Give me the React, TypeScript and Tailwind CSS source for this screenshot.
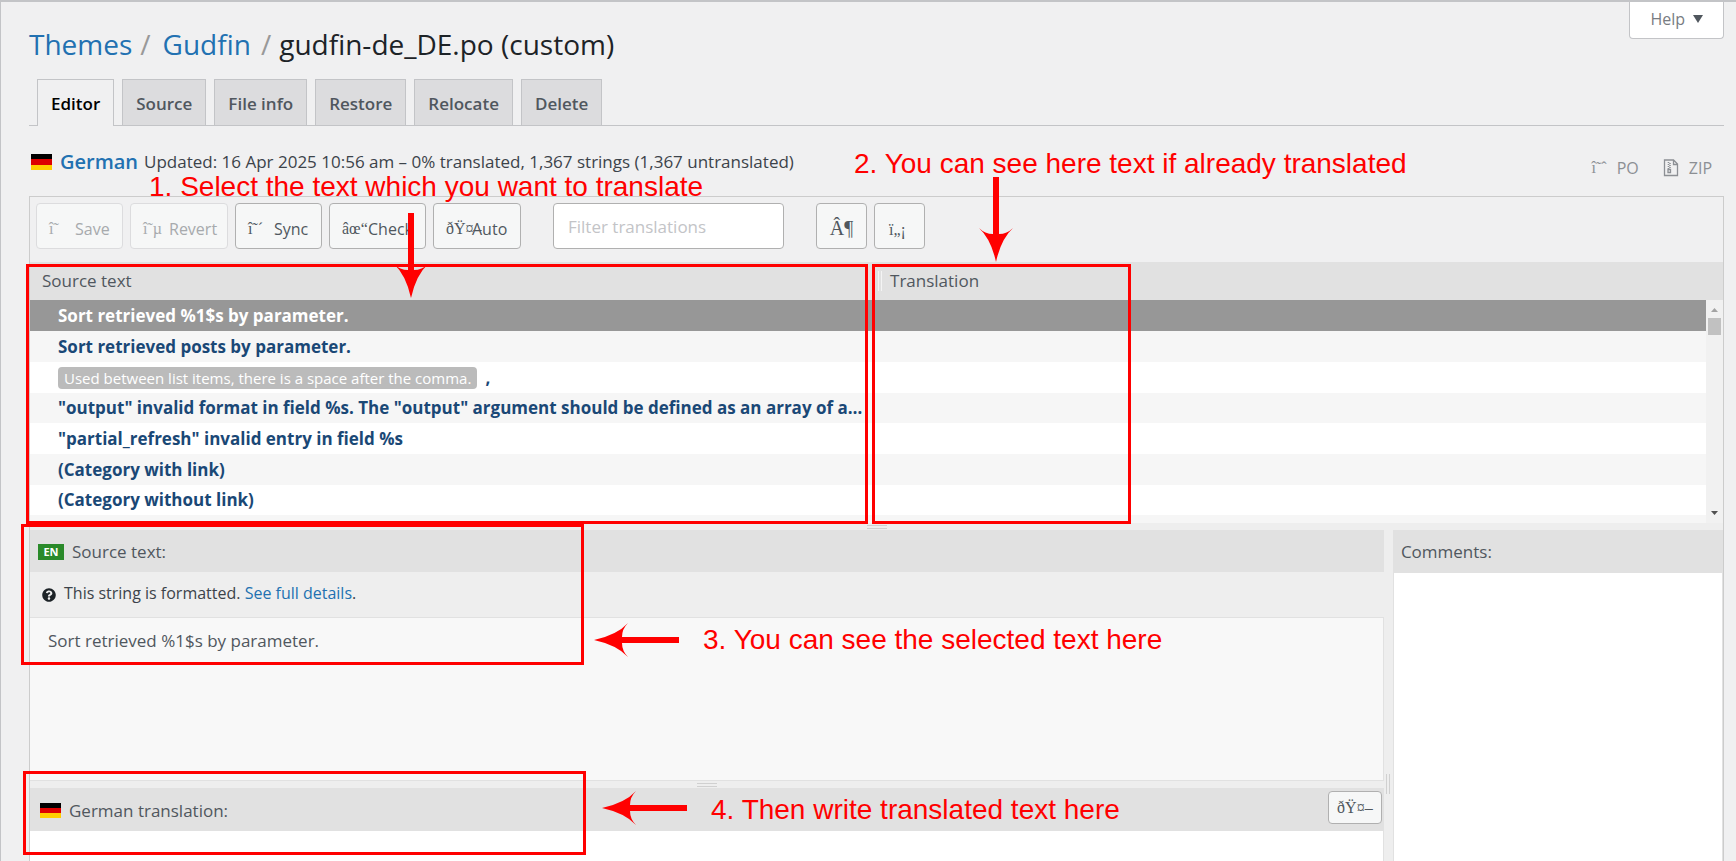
import type { ReactNode } from "react";
import { FaQuestionCircle } from "react-icons/fa";

const tabs = ["Source", "File info", "Restore", "Relocate", "Delete"];

const rows: { text: string; context?: string }[] = [
  { text: "Sort retrieved %1$s by parameter." },
  { text: "Sort retrieved posts by parameter." },
  { text: ",", context: "Used between list items, there is a space after the comma." },
  { text: '"output" invalid format in field %s. The "output" argument should be defined as an array of arguments.' },
  { text: '"partial_refresh" invalid entry in field %s' },
  { text: "(Category with link)" },
  { text: "(Category without link)" },
  { text: "" },
];

function Flag() {
  return (
    <span className="flex flex-col w-[21px] h-4 shrink-0">
      <span className="flex-1 bg-black" />
      <span className="flex-1 bg-[#dd0000]" />
      <span className="flex-1 bg-[#ffce00]" />
    </span>
  );
}

interface ToolButtonProps {
  icon: string;
  label: string;
  width: string;
  disabled?: boolean;
}

function ToolButton({ icon, label, width, disabled }: ToolButtonProps) {
  return (
    <button
      type="button"
      disabled={disabled}
      className={`${width} h-[46px] flex items-center shrink-0 rounded border bg-[#f6f7f7] whitespace-nowrap pt-1.5 pl-3 ${
        disabled ? "border-[#dcdcde] text-[#a7aaad]" : "border-[#b0b0b0] text-[#50575e]"
      }`}
    >
      <span className="font-['Liberation_Serif',serif] w-[26px] text-left">{icon}</span>
      <span>{label}</span>
    </button>
  );
}

function Arrow({ className, down }: { className: string; down?: boolean }) {
  return down ? (
    <svg className={`absolute ${className}`} width="34" height="85" viewBox="0 0 34 85" fill="#f00">
      <path d="M14 0h6v57q8 0 14-6Q22 62 17 85 12 62 0 51q6 6 14 6z" />
    </svg>
  ) : (
    <svg className={`absolute ${className}`} width="85" height="34" viewBox="0 0 85 34" fill="#f00">
      <path d="M85 14v6H28q0 8 6 14Q23 22 0 17 23 12 34 0q-6 6-6 14z" />
    </svg>
  );
}

function Note({ className, children }: { className: string; children: ReactNode }) {
  return (
    <p className={`absolute whitespace-nowrap font-['Liberation_Sans',Arial,sans-serif] text-[28px] leading-8 text-[#f00] ${className}`}>
      {children}
    </p>
  );
}

function Frame({ className }: { className: string }) {
  return <div className={`absolute pointer-events-none border-3 border-[#f00] ${className}`} />;
}

// drag handle between two stacked panes
function Grip() {
  return <span className="w-5 h-1 border-y border-[#d0d0d0]" />;
}

export default function App() {
  return (
    <div className="relative h-screen overflow-hidden flex flex-col border-t-2 border-l border-[#c3c4c7] bg-[#f0f0f1] pl-7 pr-3 font-['Open_Sans','Noto_Sans',sans-serif] text-base text-[#50575e]">
      <header className="flex items-start justify-between">
        <h1 className="flex items-center pt-[22px] text-[28px] leading-10 text-[#1d2327]">
          <a href="#themes" className="text-[#2271b1]">Themes</a>
          <span className="pl-2 pr-3 text-[#999]">/</span>
          <a href="#gudfin" className="text-[#2271b1]">Gudfin</a>
          <span className="pl-2.5 pr-2 text-[#999]">/</span>
          <span>gudfin-de_DE.po (custom)</span>
        </h1>
        <button type="button" className="flex items-center gap-2 h-[37px] px-5 pb-0.5 bg-white border border-t-0 border-[#c3c4c7] rounded-b text-[#787c82]">
          Help
          <svg width="10" height="8" viewBox="0 0 10 8" fill="#50575e"><path d="M0 0h10L5 8z" /></svg>
        </button>
      </header>

      <nav className="flex gap-2 mt-[15px] pl-2 border-b border-[#c3c4c7] text-[17px] font-semibold">
        <a href="#editor" className="h-[47px] -mb-px px-[13px] pt-0.5 flex items-center border border-b-0 border-[#c3c4c7] bg-[#f0f0f1] text-black">
          Editor
        </a>
        {tabs.map((tab) => (
          <a key={tab} href="#tab" className="h-[46px] px-[13px] pt-0.5 flex items-center border border-b-0 border-[#c3c4c7] bg-[#dcdcde]">
            {tab}
          </a>
        ))}
      </nav>

      <div className="flex items-center h-[70px]">
        <div className="flex items-center flex-1 pl-0.5 pt-0.5">
          <Flag />
          <a href="#german" className="ml-2 text-xl font-semibold text-[#2271b1]">German</a>
          <span className="ml-1.5 text-[17px] text-[#3c434a]">
            Updated: 16 Apr 2025 10:56 am – 0% translated, 1,367 strings (1,367 untranslated)
          </span>
        </div>
        <div className="flex items-center gap-6 pr-3 pt-3.5 text-[#8c8f94]">
          <a href="#po" className="flex items-center gap-2.5">
            <span className="font-['Liberation_Serif',serif]">î˜ˆ</span>
            PO
          </a>
          <a href="#zip" className="flex items-center gap-2.5">
            <svg width="16" height="18" viewBox="0 0 16 18" fill="none" stroke="currentColor" strokeWidth="1.3">
              <path d="M1.5 1h9l4 4v11.5h-13zM10.5 1v4.5h4" />
              <path d="M5.5 3v7M7 4v7" strokeDasharray="1 1" strokeWidth="1.6" />
              <path d="M5 10.500h2.500v3h-2.500z" />
            </svg>
            ZIP
          </a>
        </div>
      </div>

      <main className="flex flex-col flex-1 min-h-0 border border-b-0 border-[#ccc]">
        <div className="flex shrink-0 gap-[7px] h-[65px] pt-1.5 pl-1.5">
          <ToolButton icon="î˜" label="Save" width="w-[87px]" disabled />
          <ToolButton icon="î˜µ" label="Revert" width="w-[98px]" disabled />
          <ToolButton icon="î˜´" label="Sync" width="w-[87px]" />
          <ToolButton icon="âœ“" label="Check" width="w-[97px]" />
          <ToolButton icon="ðŸ¤–" label="Auto" width="w-[88px]" />
          <input
            aria-label="Filter translations"
            placeholder="Filter translations"
            className="w-[231px] h-[46px] mx-[25px] px-3.5 rounded border border-[#b0b0b0] bg-white text-[17px] placeholder:text-[#c3c4c7]"
          />
          <button type="button" className="w-[51px] h-[46px] pt-1 rounded border border-[#b0b0b0] bg-[#f6f7f7] font-['Liberation_Serif',serif] text-xl">
            Â¶
          </button>
          <button type="button" className="w-[51px] h-[46px] pt-2 pr-1 rounded border border-[#b0b0b0] bg-[#f6f7f7] font-['Liberation_Serif',serif]">
            ï„¡
          </button>
        </div>

        <div className="relative h-[261px] shrink-0 overflow-hidden">
          <table className="w-full table-fixed border-collapse text-[17px]">
            <thead>
              <tr className="h-[38px] bg-[#e1e1e1] text-left">
                <th className="w-[49.5%] pl-3 font-normal">Source text</th>
                <th className="pl-2.5 font-normal">
                  <div className="flex items-center gap-2">
                    <span className="w-1 h-5 border-x border-[#f4f4f4]" />
                    Translation
                  </div>
                </th>
              </tr>
            </thead>
            <tbody className="leading-6">
              {rows.map((row, i) => (
                <tr
                  key={i}
                  className={`${i === 3 || i === 6 ? "h-[30px]" : "h-[31px]"} ${
                    i === 0 ? "bg-[#979797] text-white" : "text-[#1a4876] odd:bg-white even:bg-[#f6f6f6]"
                  }`}
                >
                  <td className="pl-7 truncate font-bold">
                    {row.context && (
                      <span className="mr-2 px-1.5 py-px rounded-sm bg-[#bbb] text-[15px] font-normal text-white">{row.context}</span>
                    )}
                    {row.text}
                  </td>
                  <td />
                </tr>
              ))}
            </tbody>
          </table>
          <div className="absolute right-0 top-[38px] bottom-0 w-[17px] flex flex-col items-center bg-[#f1f1f1] py-2">
            <svg width="7" height="4" viewBox="0 0 7 4" fill="#a3a3a3"><path d="M0 4h7L3.500 0z" /></svg>
            <span className="mt-1.5 w-[13px] h-[17px] bg-[#c1c1c1]" />
            <svg className="mt-auto" width="7" height="4" viewBox="0 0 7 4" fill="#505050"><path d="M0 0h7L3.500 4z" /></svg>
          </div>
        </div>

        <div className="flex shrink-0 items-center justify-center h-[7px] bg-[#eee]">
          <Grip />
        </div>

        <div className="flex flex-1 min-h-0 bg-[#eee] text-[17px]">
          <div className="flex flex-col flex-1 min-w-0">
            <div className="flex shrink-0 items-center gap-2 h-[42px] pl-2 pt-0.5 bg-[#e1e1e1]">
              <span className="w-[26px] h-4 bg-[#2a8a2a] text-center font-bold text-[11px] leading-4 text-white">EN</span>
              Source text:
            </div>
            <p className="flex shrink-0 items-center h-[45px] pl-3 pb-1 text-base text-[#3c434a]">
              <FaQuestionCircle className="mr-2 mt-1 size-3.5 text-[#1d2327]" />
              <span>
                This string is formatted. <a href="#details" className="text-[#2271b1]">See full details</a>.
              </span>
            </p>
            <div className="shrink-0 h-[164px] border border-l-0 border-[#e1e1e1] bg-[#f8f8f8] pl-[18px] pt-2.5">
              Sort retrieved %1$s by parameter.
            </div>
            <div className="flex shrink-0 items-center justify-center h-[7px]">
              <Grip />
            </div>
            <div className="flex shrink-0 items-center justify-between h-[43px] pl-2.5 pr-0.5 bg-[#e1e1e1]">
              <label htmlFor="translation" className="flex items-center gap-2 pt-0.5">
                <Flag />
                German translation:
              </label>
              <button type="button" className="w-[54px] h-[33px] mb-1 rounded border border-[#b0b0b0] bg-[#f6f7f7] font-['Liberation_Serif',serif] text-base">
                ðŸ¤–
              </button>
            </div>
            <textarea id="translation" className="flex-1 min-h-0 resize-none border-r border-[#e1e1e1] bg-white px-4" />
          </div>

          <div className="flex flex-col items-center justify-center w-[9px]">
            <span className="w-1 h-5 mt-44 border-x border-[#d0d0d0]" />
          </div>

          <div className="flex flex-col w-[19.5%]">
            <label htmlFor="comments" className="flex shrink-0 items-center h-[42px] pl-2 pt-0.5 bg-[#e1e1e1]">
              Comments:
            </label>
            <textarea id="comments" className="flex-1 resize-none border border-b-0 border-[#e1e1e1] bg-white px-2" />
          </div>
        </div>
      </main>

      <Frame className="left-[25px] top-[262px] w-[842px] h-[260px]" />
      <Frame className="left-[871px] top-[262px] w-[259px] h-[260px]" />
      <Frame className="left-[20px] top-[522px] w-[563px] h-[141px]" />
      <Frame className="left-[22px] top-[769px] w-[563px] h-[84px]" />

      <Note className="left-[148px] top-[169px]">1. Select the text which you want to translate</Note>
      <Note className="left-[853px] top-[146px]">2. You can see here text if already translated</Note>
      <Note className="left-[702px] top-[622px]">3. You can see the selected text here</Note>
      <Note className="left-[710px] top-[792px]">4. Then write translated text here</Note>
      <Arrow down className="left-[393px] top-[211px]" />
      <Arrow down className="left-[978px] top-[175px]" />
      <Arrow className="left-[593px] top-[621px]" />
      <Arrow className="left-[601px] top-[789px]" />
    </div>
  );
}
